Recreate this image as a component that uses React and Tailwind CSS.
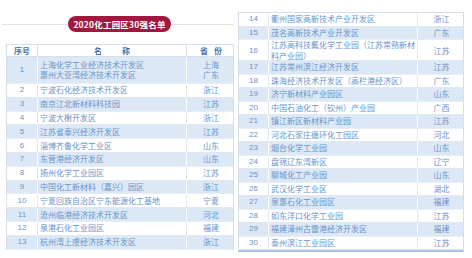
import React from 'react';

const leftRows = [
    { n: '1', name: ['上海化学工业经济技术开发区', '惠州大亚湾经济技术开发区'], p: ['上海', '广东'] },
    { n: '2', name: '宁波石化经济技术开发区', p: '浙江' },
    { n: '3', name: '南京江北新材料科技园', p: '江苏' },
    { n: '4', name: '宁波大榭开发区', p: '浙江' },
    { n: '5', name: '江苏省泰兴经济开发区', p: '江苏' },
    { n: '6', name: '淄博齐鲁化学工业区', p: '山东' },
    { n: '7', name: '东营港经济开发区', p: '山东' },
    { n: '8', name: '扬州化学工业园区', p: '江苏' },
    { n: '9', name: '中国化工新材料（嘉兴）园区', p: '浙江' },
    { n: '10', name: '宁夏回族自治区宁东能源化工基地', p: '宁夏' },
    { n: '11', name: '沧州临港经济技术开发区', p: '河北' },
    { n: '12', name: '泉港石化工业园区', p: '福建' },
    { n: '13', name: '杭州湾上虞经济技术开发区', p: '浙江' },
];

const rightRows = [
    { n: '14', name: '衢州国家高新技术产业开发区', p: '浙江' },
    { n: '15', name: '茂名高新技术产业开发区', p: '广东' },
    { n: '16', name: ['江苏高科技氟化学工业园（江苏常熟新材', '料产业园）'], p: '江苏' },
    { n: '17', name: '江苏常州滨江经济开发区', p: '江苏' },
    { n: '18', name: '珠海经济技术开发区（高栏港经济区）', p: '广东' },
    { n: '19', name: '济宁新材料产业园区', p: '山东' },
    { n: '20', name: '中国石油化工（钦州）产业园', p: '广西' },
    { n: '21', name: '镇江新区新材料产业园', p: '江苏' },
    { n: '22', name: '河北石家庄循环化工园区', p: '河北' },
    { n: '23', name: '烟台化学工业园', p: '山东' },
    { n: '24', name: '盘锦辽东湾新区', p: '辽宁' },
    { n: '25', name: '聊城化工产业园', p: '山东' },
    { n: '26', name: '武汉化学工业区', p: '湖北' },
    { n: '27', name: '泉惠石化工业园区', p: '福建' },
    { n: '28', name: '如东洋口化学工业园', p: '江苏' },
    { n: '29', name: '福建漳州古雷港经济开发区', p: '福建' },
    { n: '30', name: '泰州滨江工业园区', p: '江苏' },
];

function Lines({ value, center }) {
    const list = Array.isArray(value) ? value : [value];
    return (
        <div className={`flex flex-col ${center ? 'items-center' : 'items-start'}`}>
            {list.map((t, i) => (
                <div key={i} className={list.length > 1 ? 'leading-[10.5px]' : 'leading-none'}>{t}</div>
            ))}
        </div>
    );
}

function Row({ row, cols, height, shaded }) {
    const line = shaded ? 'border-white' : 'border-[#e3e8ee]';
    return (
        <div
            className={`grid ${cols} border-b ${shaded ? 'bg-[#dce8f5] border-b-[#e9eef4]' : 'bg-white border-b-[#e3e8ee]'}`}
            style={{ height }}
        >
            <div className={`flex items-center justify-center border-r ${line} font-['Liberation_Sans',sans-serif]`}>{row.n}</div>
            <div className={`flex items-center pl-[2px] border-r ${line}`}>
                <Lines value={row.name} />
            </div>
            <div className="flex items-center justify-center">
                <Lines value={row.p} center />
            </div>
        </div>
    );
}

export default function App() {
    const fam = "font-['Noto_Sans_CJK_SC','Noto_Sans',sans-serif]";
    return (
        <div className={`w-[472px] h-[258px] bg-white flex text-[8px] text-[#6a93ca] ${fam}`}>
            {/* left half */}
            <div className="w-[236px] flex flex-col pt-[16px]">
                <div className="ml-[2px] w-[232px] h-[16px] flex items-center">
                    <div className="w-[66px] h-[1px] bg-[#e2e2e2]" />
                    <div className="w-[103px] h-[16px] rounded-full bg-[#a3163f] text-white text-[8.5px] font-bold flex items-center justify-center tracking-[0.2px]">
                        2020化工园区30强名单
                    </div>
                    <div className="flex-1 h-[1px] bg-[#e2e2e2]" />
                </div>
                <div className="ml-[6px] mt-[12px] w-[228px] border-l border-r border-[#d6dee8]">
                    <div className="grid grid-cols-[31px_149px_48px] h-[13px] border-t border-b border-[#d6dee8] bg-white font-bold text-[#4a72aa]">
                        <div className="flex items-center justify-center border-r border-[#d6dee8]">序号</div>
                        <div className="flex items-center justify-center border-r border-[#d6dee8] gap-[20px]">
                            <span>名</span><span>称</span>
                        </div>
                        <div className="flex items-center justify-center gap-[6px]">
                            <span>省</span><span>份</span>
                        </div>
                    </div>
                    {leftRows.map((r, i) => (
                        <Row
                            key={r.n}
                            row={r}
                            cols="grid-cols-[31px_149px_48px]"
                            height={i === 0 ? 27 : 13.8}
                            shaded={i % 2 === 0}
                        />
                    ))}
                </div>
            </div>

            {/* right half */}
            <div className="w-[236px] flex flex-col pt-[12px]">
                <div className="ml-[2px] w-[226px] border-l border-r border-t border-[#d6dee8] border-b-2 border-b-[#a9c4e2]">
                    {rightRows.map((r, i) => (
                        <Row
                            key={r.n}
                            row={r}
                            cols="grid-cols-[30px_149px_47px]"
                            height={r.n === '16' ? 21 : 13.5}
                            shaded={i % 2 === 1}
                        />
                    ))}
                </div>
            </div>
        </div>
    );
}
